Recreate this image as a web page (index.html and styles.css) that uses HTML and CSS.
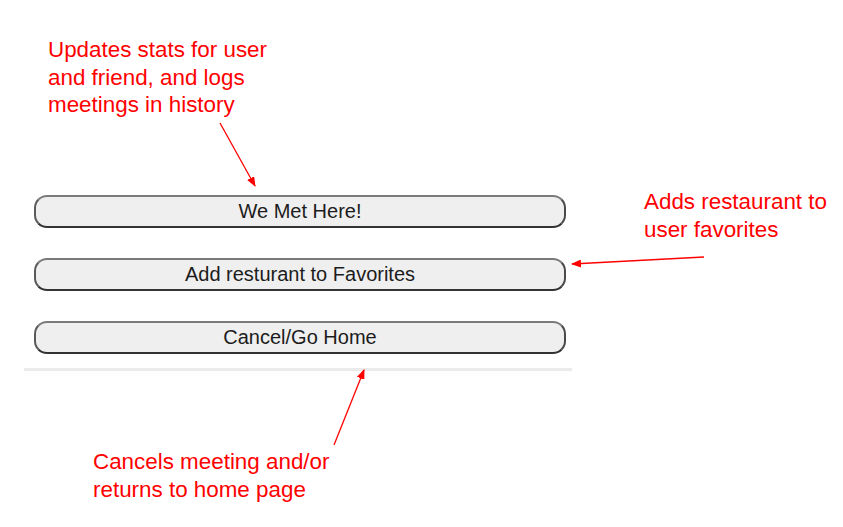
FILE: index.html
```html
<!DOCTYPE html>
<html>
<head>
<meta charset="utf-8">
<link rel="stylesheet" href="styles.css">
</head>
<body>
<div class="canvas">
  <section class="panel">
    <button class="btn">We Met Here!</button>
    <button class="btn">Add resturant to Favorites</button>
    <button class="btn">Cancel/Go Home</button>
    <hr class="divider">
  </section>

  <p class="note note-stats">Updates stats for user<br>and friend, and logs<br>meetings in history</p>
  <p class="note note-fav">Adds restaurant to<br>user favorites</p>
  <p class="note note-cancel">Cancels meeting and/or<br>returns to home page</p>

  <svg class="arrows" width="843" height="527" viewBox="0 0 843 527">
    <defs>
      <marker id="head" markerWidth="10" markerHeight="8" refX="9" refY="4" orient="auto" markerUnits="userSpaceOnUse">
        <path d="M0,0 L10,4 L0,8 Z" fill="#ff0000"/>
      </marker>
    </defs>
    <line x1="220" y1="123" x2="255" y2="186" stroke="#ff0000" stroke-width="1.3" marker-end="url(#head)"/>
    <line x1="704" y1="257" x2="572" y2="264" stroke="#ff0000" stroke-width="1.3" marker-end="url(#head)"/>
    <line x1="334" y1="445" x2="364" y2="370" stroke="#ff0000" stroke-width="1.3" marker-end="url(#head)"/>
  </svg>
</div>
</body>
</html>
```

FILE: styles.css
```css
html, body {
  margin: 0;
  padding: 0;
  background: #ffffff;
}

.canvas {
  position: relative;
  width: 843px;
  height: 527px;
  overflow: hidden;
  font-family: "Liberation Sans", Arial, sans-serif;
}

.panel {
  width: 548px;
  margin-left: 24px;
  padding-top: 195px;
  display: flex;
  flex-direction: column;
  align-items: flex-start;
  gap: 30px;
}

.btn {
  box-sizing: border-box;
  margin-left: 10px;
  width: 532px;
  height: 33px;
  padding: 0;
  background: #efefef;
  border: 2px solid;
  border-color: #7a7a7a #4a4a4a #333333 #5a5a5a;
  border-radius: 13px;
  font-family: "Liberation Sans", Arial, sans-serif;
  font-size: 20px;
  color: #1c1c1c;
  text-align: center;
  line-height: 29px;
}

.divider {
  box-sizing: border-box;
  width: 548px;
  height: 3px;
  margin: -16px 0 0 0;
  border: none;
  background: #ebebeb;
}

.note {
  position: absolute;
  margin: 0;
  color: #ff0000;
  font-size: 22.4px;
  line-height: 27.5px;
}

.note-stats {
  left: 48px;
  top: 36px;
}

.note-fav {
  left: 644px;
  top: 188px;
}

.note-cancel {
  left: 93px;
  top: 448px;
}

.arrows {
  position: absolute;
  left: 0;
  top: 0;
  pointer-events: none;
}
```
